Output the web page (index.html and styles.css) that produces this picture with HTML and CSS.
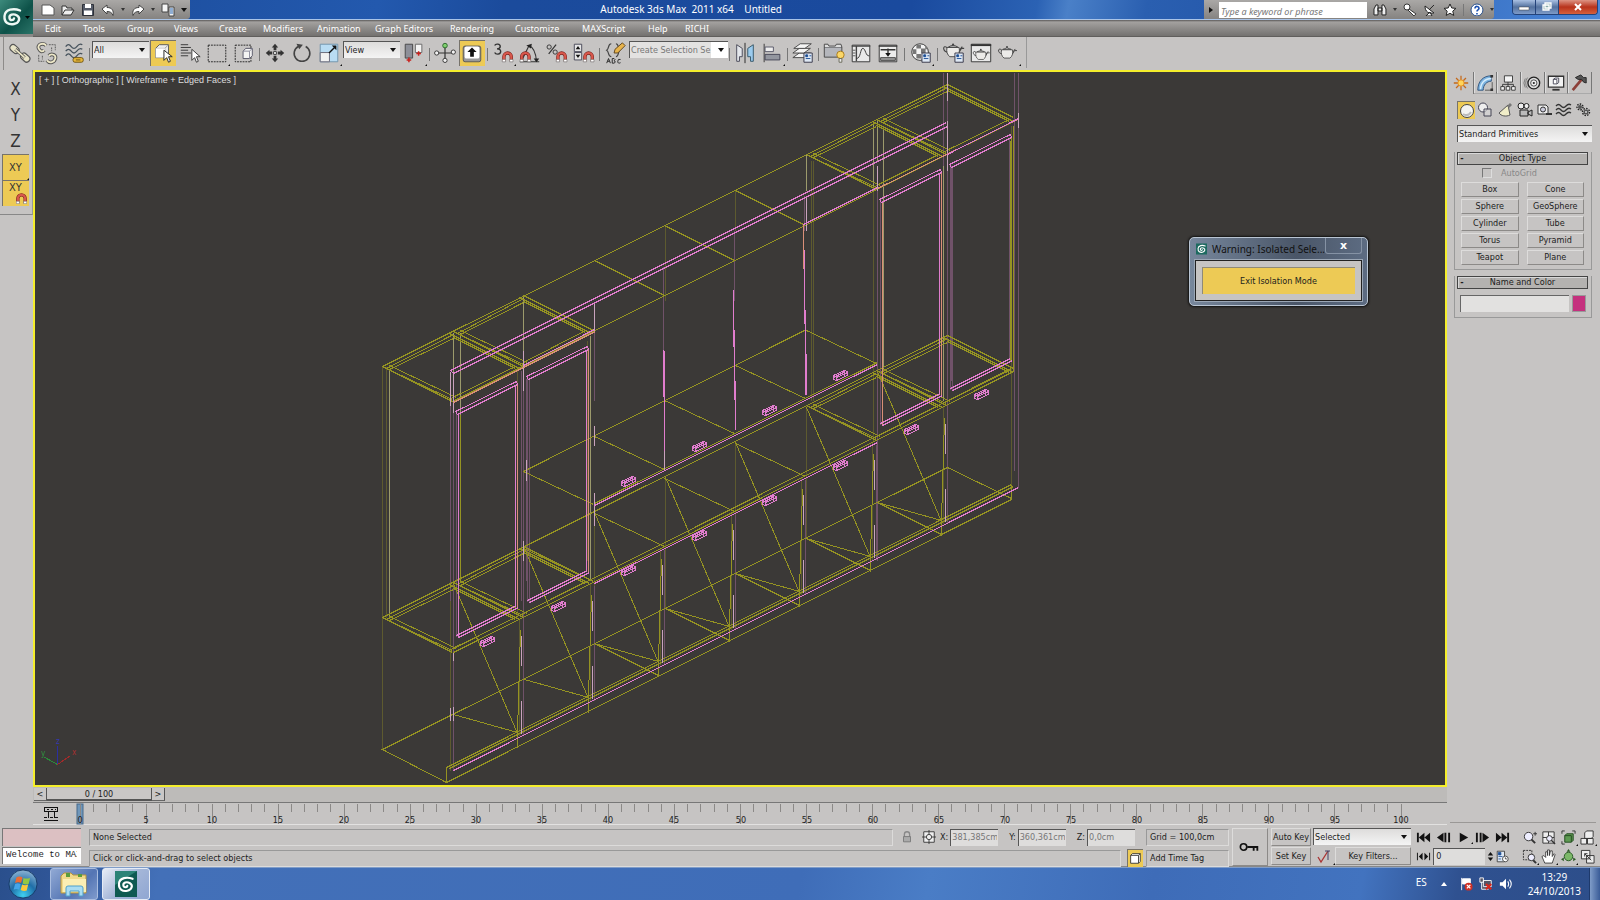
FILE: index.html
```html
<!DOCTYPE html>
<html lang="en">
<head>
<meta charset="utf-8">
<title>Autodesk 3ds Max 2011 x64 - Untitled</title>
<link rel="stylesheet" href="styles.css">
</head>
<body>
<svg class="defs" aria-hidden="true">
  <defs>
    <g id="magnet"><path d="M1 10V5a4 4 0 0 1 8 0v5" fill="none" stroke="#7a1f1a" stroke-width="3.6"/><path d="M1 9V5a4 4 0 0 1 8 0v4" fill="none" stroke="#d8584c" stroke-width="2.4"/><path d="M-.8 8h3.6v2.6H-.8zM7.200 8h3.600v2.600H7.200z" fill="#fff" stroke="#555" stroke-width=".5"/></g>
    <g id="teapot"><path d="M5 6c-2-3-5-2-4 1 .6 2 3 3 4.500 3M17 9l4-5M17 11l3-5h3" fill="none" stroke="#444" stroke-width="1.200"/><path d="M4.500 5h13c1 4 0 8-3 10h-7c-3-2-4-6-3-10z" fill="#ecebe9" stroke="#444"/><path d="M6 4.500Q11 1 16 4.500z" fill="#fff" stroke="#444"/><circle cx="11" cy="1.800" r="1.200" fill="#444"/></g>
    <g id="panelbox"><path d="M0 0h9v10H0z" fill="#dfe9f5" stroke="#334"/><path d="M2 2h2v2H2zM2 6h5M6 3h2" fill="#1c4e96" stroke="#1c4e96"/></g>
    <g id="maxlogo"><path d="M20 5.500C14 3 5 4 4.500 11S9 20 14 19s7-6 3-8.500-8-.5-7.500 2.500 4 2.500 4.500.500" fill="none" stroke="currentColor" stroke-width="2.400" stroke-linecap="round"/></g>
  </defs>
</svg>

<header class="top">
  <button class="app" aria-label="Application menu">
    <svg viewBox="0 0 33 33"><g transform="translate(0 4)" color="#eef8f4"><use href="#maxlogo"/></g><path d="M25 15h5l-2.500 3z" fill="#000"/></svg>
  </button>
  <div class="title">
    <div class="quick">
      <button aria-label="New"><svg viewBox="0 0 14 14"><path d="M1 2h8l4 3v7H1z" fill="#fff" stroke="#555"/></svg></button>
      <button aria-label="Open"><svg viewBox="0 0 14 14"><path d="M1 12V3h4l1 2h5v2M1 12l3-5h9l-3 5z" fill="#eee" stroke="#333"/></svg></button>
      <button aria-label="Save"><svg viewBox="0 0 14 14"><path d="M1.500 1.500h11v11h-11z" fill="#555b68" stroke="#2d3038"/><path d="M4 1h6v4H4zM3 7.500h8V12H3z" fill="#fff"/></svg></button>
      <button aria-label="Undo"><svg viewBox="0 0 14 14"><path d="M1 6l5-4v2.500c5 0 7 3 6 8-1-3-3-4-6-4V11z" fill="#fff" stroke="#444"/></svg></button>
      <i class="dd"></i>
      <button aria-label="Redo"><svg viewBox="0 0 14 14"><path d="M13 6L8 2v2.500c-5 0-7 3-6 8 1-3 3-4 6-4V11z" fill="#fff" stroke="#444"/></svg></button>
      <i class="dd"></i>
      <button aria-label="Project folder"><svg viewBox="0 0 14 14"><path d="M1 1h6v8H1zM8 4h5v9H8z" fill="#f4f4f4" stroke="#444"/><path d="M9 6h3M9 8h3M9 10h3" stroke="#2a66b0"/></svg></button>
      <i class="dd big"></i>
    </div>
    <h1>Autodesk 3ds Max&nbsp; 2011 x64 <span>Untitled</span></h1>
    <div class="info">
      <i class="play"></i>
      <input type="text" aria-label="Search" placeholder="Type a keyword or phrase">
      <button aria-label="Find"><svg viewBox="0 0 14 14"><path d="M1 12V6l2-4h2v10zM9 12V2h2l2 4v6zM5 5h4v3H5z" fill="#eee" stroke="#222"/></svg></button>
      <i class="dd"></i>
      <button aria-label="Subscription"><svg viewBox="0 0 14 14"><path d="M6 6l7 5-2 2-6-6" fill="#fff" stroke="#333"/><circle cx="4" cy="4" r="3" fill="#fff" stroke="#333"/></svg></button>
      <button aria-label="Communication"><svg viewBox="0 0 14 14"><path d="M2 3c0 6 4 8 9 7zM7 6l4-4M3 13h6l-2-4z" fill="#fff" stroke="#222"/></svg></button>
      <button aria-label="Favorites"><svg viewBox="0 0 14 14"><path d="M7 1l1.800 4 4.200.4-3.200 2.800 1 4.300L7 10.300 3.200 12.500l1-4.300L1 5.400 5.200 5z" fill="#fff" stroke="#222"/></svg></button>
      <i class="bar"></i>
      <button aria-label="Help"><svg viewBox="0 0 14 14"><circle cx="7" cy="7" r="6" fill="#fff" stroke="#28508c"/><path d="M5 5.500c0-3 4-2.500 4 0C9 7 7 7 7 8.500M7 10v1.500" fill="none" stroke="#1a4fb0" stroke-width="1.600"/></svg></button>
      <i class="dd"></i>
    </div>
    <div class="win">
      <button aria-label="Minimize"><svg viewBox="0 0 14 10"><path d="M2 5h10v3H2z" fill="#fff" stroke="#444" stroke-width=".5"/></svg></button>
      <button aria-label="Restore"><svg viewBox="0 0 14 10"><path d="M5 1h6v5H5zM3 3h6v5H3z" fill="#8aa" stroke="#fff" stroke-width="1.300"/></svg></button>
      <button class="close" aria-label="Close"><svg viewBox="0 0 14 10"><path d="M4 2l6 6M10 2L4 8" stroke="#fff" stroke-width="2"/></svg></button>
    </div>
  </div>
  <nav class="menu">
    <button>Edit</button><button>Tools</button><button>Group</button><button>Views</button><button>Create</button><button>Modifiers</button><button>Animation</button><button>Graph Editors</button><button>Rendering</button><button>Customize</button><button>MAXScript</button><button>Help</button><button>RICHI</button>
  </nav>
</header>

<div class="toolbar">
  <button aria-label="Link"><svg viewBox="0 0 26 26"><g fill="#e8e4c8" stroke="#555" stroke-width="1.300"><rect x="2" y="5" width="11" height="7" rx="3.500" transform="rotate(42 7 8)"/><rect x="13" y="14" width="11" height="7" rx="3.500" transform="rotate(42 18 18)"/></g><path d="M8 9l10 9" stroke="#555" stroke-width="3.500"/><path d="M8 9l10 9" stroke="#eee8c8" stroke-width="1.800"/></svg></button>
  <button aria-label="Unlink"><svg viewBox="0 0 26 26"><g fill="none"><path d="M12 5C9 1 2 4 4 8s4 4 6 2M15 16c3-3 8-1 7 3s-6 6-9 2" stroke="#555" stroke-width="4"/><path d="M12 5C9 1 2 4 4 8s4 4 6 2M15 16c3-3 8-1 7 3s-6 6-9 2" stroke="#eee8c8" stroke-width="2"/><path d="M15 4h7v6M4 15v7h6M18 7v4M8 16v4" stroke="#555" stroke-dasharray="2 1"/></g></svg></button>
  <button aria-label="Bind to space warp"><svg viewBox="0 0 26 26"><path d="M4 6q3-4 6 0t6 0 6-2M4 11q3-4 6 0t6 0 6-2M4 16q3-4 6 0t6 0 6-2" fill="none" stroke="#46525c" stroke-width="1.400"/><rect x="12" y="18" width="11" height="5" rx="2" fill="#e8b83c" stroke="#6a5010"/><path d="M15 20.500h5" stroke="#6a5010"/></svg></button>
  <i class="sep"></i>
  <span class="sel filter"><select aria-label="Selection filter"><option>All</option></select></span>
  <button class="on" aria-label="Select object"><svg viewBox="0 0 26 26"><path d="M5 8l4-4h10v10l-4 4H5z" fill="#eee" stroke="#555"/><path d="M5 8h10v10M15 8l4-4" fill="none" stroke="#999"/><path d="M5 8h10v10H5z" fill="#fff"/><path d="M14 10v11l3-3 2 5 2-1-2-5h4z" fill="#fff" stroke="#222"/></svg></button>
  <button aria-label="Select by name"><svg viewBox="0 0 26 26"><path d="M3 4h8M3 7h11M3 10h8M3 13h11M3 16h8" stroke="#333"/><path d="M15 9v12l3-3 2 5 2-1-2-5h4z" fill="#fff" stroke="#333"/></svg></button>
  <button class="fly" aria-label="Rectangular region"><svg viewBox="0 0 26 26"><path d="M3.500 4.500h19v18h-19z" fill="none" stroke="#222" stroke-dasharray="2 1"/></svg></button>
  <button aria-label="Window crossing"><svg viewBox="0 0 26 26"><path d="M3.500 4.500h17v18h-17z" fill="none" stroke="#222" stroke-dasharray="2 1"/><path d="M12 11l3-3h7v8l-3 3h-7z" fill="#f4f4f4" stroke="#556"/><path d="M12 11h7v8M19 11l3-3" fill="none" stroke="#889"/></svg></button>
  <i class="sep"></i>
  <button aria-label="Move"><svg viewBox="0 0 26 26"><path d="M13 3l3.500 4h-2v3h-3V7h-2zM13 23l3.500-4h-2v-3h-3v3h-2zM3 13l4-3.500v2h3v3H7v2zM23 13l-4-3.500v2h-3v3h3v2z" fill="#333"/><path d="M11.500 11.500h3v3h-3z" fill="#fff" stroke="#333"/></svg></button>
  <button aria-label="Rotate"><svg viewBox="0 0 26 26"><path d="M9 6a8.500 8.500 0 1 0 8 0" fill="none" stroke="#444" stroke-width="1.700"/><path d="M7 3l7 1-4 5z" fill="#444"/></svg></button>
  <button class="fly" aria-label="Scale"><svg viewBox="0 0 26 26"><path d="M3.500 3.500h19v19h-19z" fill="#b9dcf3" stroke="#6f93ab"/><path d="M3.500 12.500h10v10h-10z" fill="#f2f2f2" stroke="#667"/><path d="M13 13l6-6" stroke="#111" stroke-width="1.500"/><path d="M21 5v5l-5-5z" fill="#111"/></svg></button>
  <span class="sel filter"><select aria-label="Reference coordinates"><option>View</option></select></span>
  <button class="fly" aria-label="Pivot center"><svg viewBox="0 0 26 26"><path d="M3.500 3.500h8v15h-8z" fill="#8d8f98" stroke="#444"/><path d="M14.500 3.500h7v9h-7z" fill="#f4f4f4" stroke="#666"/><path d="M7.500 18v5M5 20.500h5M18 11v5M15.500 13.500h5" stroke="#c9201c" stroke-width="1.600"/></svg></button>
  <i class="sep"></i>
  <button aria-label="Manipulate"><svg viewBox="0 0 26 26"><path d="M13 6v14M5 13h16" stroke="#333" stroke-width="1.300"/><g fill="#f2f2f2" stroke="#333"><circle cx="4" cy="13" r="2.300"/><circle cx="22" cy="12" r="2.300"/><circle cx="13" cy="21" r="2.300"/></g><circle cx="13" cy="5" r="2.500" fill="#7ed06e" stroke="#2c662c"/></svg></button>
  <button class="on" aria-label="Keyboard override"><svg viewBox="0 0 26 26"><rect x="3.500" y="5.500" width="19" height="17" rx="2" fill="#999" stroke="#555"/><rect x="5" y="6" width="16" height="13" rx="2" fill="#fff"/><path d="M13 7l5 5h-3v5h-4v-5H8z" fill="#111"/></svg></button>
  <i class="sep"></i>
  <button class="fly" aria-label="Snaps"><svg viewBox="0 0 26 26"><path d="M4 5c1-2.500 6-2 6 1 0 2-2 2.500-3.500 2.500 2 0 4 1 4 3 0 3.500-5.500 3.500-6.500 1" fill="none" stroke="#333" stroke-width="1.500"/><use href="#magnet" x="13" y="12"/></svg></button>
  <button aria-label="Angle snap"><svg viewBox="0 0 26 26"><path d="M4 21L12 5M2 22.500h21M12 5q7 3 8 17" fill="none" stroke="#333" stroke-width="1.200"/><path d="M9 5l6-2-1 5zM17 19l3 4 3-4z" fill="#222"/><use href="#magnet" x="3" y="12"/></svg></button>
  <button aria-label="Percent snap"><svg viewBox="0 0 26 26"><path d="M12 4L4 14" stroke="#333" stroke-width="1.300"/><circle cx="4.500" cy="6.500" r="2.300" fill="none" stroke="#333"/><circle cx="11" cy="12" r="2.300" fill="none" stroke="#333"/><use href="#magnet" x="13" y="12"/></svg></button>
  <button aria-label="Spinner snap"><svg viewBox="0 0 26 26"><path d="M2.500 3.500h8v8h-8zM2.500 12.500h8v8h-8z" fill="#e6e6e6" stroke="#445"/><path d="M4 9h5L6.500 5.500zM4 15h5l-2.500 3.500z" fill="#111"/><use href="#magnet" x="13" y="12"/></svg></button>
  <i class="sep"></i>
  <button aria-label="Edit selection sets"><svg viewBox="0 0 26 26"><path d="M9 3C5 3 7 8 4 10c3 2 1 7 5 7M14 3c3 0 2 4 4 7-2 3-1 7-4 7" fill="none" stroke="#444" stroke-width="1.300"/><path d="M12 13l1-4 8-7 3 3-8 8z" fill="#e8b44c" stroke="#5c421c"/><path d="M4 24l2-5 2 5M5 22h2M10 24v-5h2q2 1 0 2.500 3 1 0 2.500zM19 20q-3-1-3 2t3 1.500" fill="none" stroke="#222"/></svg></button>
  <span class="sel named"><input type="text" aria-label="Named selection sets" placeholder="Create Selection Se"></span>
  <i class="sep"></i>
  <button aria-label="Mirror"><svg viewBox="0 0 26 26"><path d="M4 4l6 4v9l-3 0v5H4z" fill="#e4e7ec" stroke="#445"/><path d="M22 4l-6 4v9h3v5h3z" fill="#9bcbee" stroke="#356"/><path d="M13 2v22" stroke="#222"/></svg></button>
  <button class="fly" aria-label="Align"><svg viewBox="0 0 26 26"><path d="M4.500 3v20" stroke="#333"/><path d="M5.500 6.500h9v5h-9z" fill="#eee" stroke="#556"/><path d="M5.500 14.500h16v6h-16z" fill="#93969f" stroke="#445"/></svg></button>
  <i class="sep"></i>
  <button aria-label="Layers"><svg viewBox="0 0 26 26"><g fill="#f5f5f5" stroke="#444"><path d="M2 18l7-5h12l-7 5z"/><path d="M2 13l7-5h12l-7 5z"/><path d="M3 8l7-5h12l-7 5z"/></g><use href="#panelbox" x="14" y="13"/></svg></button>
  <i class="sep"></i>
  <button aria-label="Containers"><svg viewBox="0 0 26 26"><path d="M2.500 6.500h19v11h-19z" fill="#b4b6bc" stroke="#444"/><path d="M2.500 6.500v-3h4l1 2h7l1-2h5l1 3" fill="#ddd" stroke="#444"/><circle cx="20" cy="15" r="4" fill="#fbd768" stroke="#a6791b"/><path d="M18.500 19h3v4h-3z" fill="#eee" stroke="#665"/></svg></button>
  <button aria-label="Curve editor"><svg viewBox="0 0 26 26"><path d="M3.500 4.500h19v18h-19z" fill="#e9e9e9" stroke="#333"/><path d="M3 5.500h20M8 5v17" stroke="#444" stroke-width="1.500"/><path d="M8 19c5 0 4-11 7-11s3 9 7 8" fill="none" stroke="#333"/><path d="M4 10h3M4 13h3M4 16h3" stroke="#555"/></svg></button>
  <button aria-label="Schematic view"><svg viewBox="0 0 26 26"><path d="M3.500 4.500h19v18h-19z" fill="#ececec" stroke="#333"/><path d="M3 5.500h20M5 9.500h16M13 8v7" stroke="#333" stroke-width="1.500"/><path d="M10 13h6l-3 4z" fill="#111"/><path d="M5 18h16v3H5z" fill="#999" stroke="#444"/></svg></button>
  <i class="sep wide"></i>
  <button class="fly" aria-label="Material editor"><svg viewBox="0 0 26 26"><circle cx="12" cy="12" r="9" fill="#f4f4f4" stroke="#333"/><path d="M8 4h5v4H8zM4 9h4v5H4zM13 8h5v5h-5zM8 14h5v5H8zM17 5l4 4h-3z" fill="#777"/><use href="#panelbox" x="14" y="13"/></svg></button>
  <i class="sep wide"></i>
  <button aria-label="Render setup"><svg viewBox="0 0 26 26"><use href="#teapot" x="1" y="2"/><use href="#panelbox" x="14" y="13"/></svg></button>
  <button aria-label="Rendered frame"><svg viewBox="0 0 26 26"><path d="M2.500 3.500h21v19h-21z" fill="#e9e9e9" stroke="#333"/><path d="M2 4.500h22" stroke="#333" stroke-width="2"/><g transform="translate(4 8) scale(.8)"><use href="#teapot"/></g></svg></button>
  <button class="fly" aria-label="Render"><svg viewBox="0 0 26 26"><g transform="translate(2 5) scale(.9)"><use href="#teapot"/></g></svg></button>
  <i class="edge"></i>
</div>

<main>
  <aside class="axes">
    <button>X</button><button>Y</button><button>Z</button>
    <button class="on small fly">XY</button>
    <button class="on small snap">XY<svg viewBox="0 0 12 12"><use href="#magnet" x="1" y="1"/></svg></button>
  </aside>

  <section class="center">
    <div class="viewport">
      <p>[ + ] [ Orthographic ] [ Wireframe + Edged Faces ]</p>
      <svg id="scene" viewBox="35 72 1410 713" role="img" aria-label="Cabinet wireframe"></svg>
      <div class="dialog" role="dialog" aria-label="Isolation">
        <header><svg viewBox="0 0 24 24"><rect width="24" height="24" fill="#1d6a60"/><g color="#fff"><use href="#maxlogo"/></g></svg><span>Warning: Isolated Sele...</span><button aria-label="Close">x</button></header>
        <div class="inner"><button>Exit Isolation Mode</button></div>
      </div>
    </div>
    <div class="slider"><button>&lt;</button><button class="thumb">0 / 100</button><button>&gt;</button></div>
    <div class="track"><svg id="ruler" viewBox="33 803 1414 22" role="img" aria-label="Track bar"></svg></div>
  </section>

  <aside class="panel">
    <div class="tabs">
      <button class="cur" aria-label="Create"><svg viewBox="0 0 20 20"><path d="M10 2v16M2 10h16M4.500 4.500l11 11M15.500 4.500l-11 11" stroke="#c46a1c" stroke-width="1.400"/><circle cx="10" cy="10" r="3.500" fill="#ffd45a" stroke="#e18a22"/></svg></button>
      <button aria-label="Modify"><svg viewBox="0 0 20 20"><path d="M2 18C2 8 8 2 17 2v6c-5 0-9 4-9 10z" fill="#7db4e0" stroke="#2c4f78"/><path d="M5 17C5 10 10 5 17 5" fill="none" stroke="#d5ecfb" stroke-width="1.500"/><path d="M10 18h8V9" fill="none" stroke="#555"/><path d="M16 16h3v3h-3zM16 1h3v3h-3z" fill="#333"/></svg></button>
      <button aria-label="Hierarchy"><svg viewBox="0 0 20 20"><path d="M6 2h9v7H6zM2 14h4v4H2zM8 14h4v4H8zM14 14h4v4h-4z" fill="#f4f4f4" stroke="#333"/><path d="M10 9v5M4 14v-2.500h12V14" fill="none" stroke="#333"/></svg></button>
      <button aria-label="Motion"><svg viewBox="0 0 20 20"><path d="M5 4q-4 6 0 12M2.500 5q-3 5 0 10" fill="none" stroke="#777"/><circle cx="12" cy="10" r="6.500" fill="#ddd" stroke="#222" stroke-width="1.500"/><circle cx="12" cy="10" r="3.500" fill="#eee" stroke="#444"/><circle cx="12" cy="10" r="1.200" fill="#222"/></svg></button>
      <button aria-label="Display"><svg viewBox="0 0 20 20"><path d="M1.500 2.500h17v12h-17z" fill="#f2f2f2" stroke="#333" stroke-width="1.400"/><path d="M7 6l2-1.500h4v5L11 11H7zM7 6h4v5" fill="#fff" stroke="#445"/><path d="M6 17.500h8" stroke="#333" stroke-width="2"/></svg></button>
      <button aria-label="Utilities"><svg viewBox="0 0 20 20"><path d="M13 6L3 18" stroke="#8c3f38" stroke-width="3"/><path d="M6 4l6-3 3 3h3v6l-3-1-2-3H9z" fill="#555" stroke="#222"/></svg></button>
    </div>
    <div class="cats">
      <button class="on" aria-label="Geometry"><svg viewBox="0 0 18 18"><circle cx="10" cy="10" r="6.500" fill="#f4f4f2" stroke="#444"/><path d="M6 13q5 3 8-2" stroke="#bbb" stroke-width="2" fill="none"/></svg></button>
      <button aria-label="Shapes"><svg viewBox="0 0 18 18"><circle cx="7" cy="6.500" r="4.500" fill="#eee" stroke="#445"/><path d="M8 8h7v7H8z" fill="#ddd8" stroke="#445"/></svg></button>
      <button aria-label="Lights"><svg viewBox="0 0 18 18"><path d="M3 12L12 4l2 10c-4 2-9 1-11-2z" fill="#f0edc8" stroke="#555"/><path d="M11 5l3-3 2 2-3 3z" fill="#777"/></svg></button>
      <button aria-label="Cameras"><svg viewBox="0 0 18 18"><circle cx="6" cy="5" r="3" fill="#eee" stroke="#222"/><circle cx="11.500" cy="5" r="2.500" fill="#eee" stroke="#222"/><path d="M5 9h8v6H5zM13 11l4-2v6l-4-2z" fill="#bbb" stroke="#222"/></svg></button>
      <button aria-label="Helpers"><svg viewBox="0 0 18 18"><path d="M3 4h8l2 2v7H3z" fill="#eee" stroke="#333"/><circle cx="8" cy="8.500" r="2.500" fill="#ccd" stroke="#333"/><path d="M11 13h6" stroke="#333" stroke-width="2"/></svg></button>
      <button aria-label="Space warps"><svg viewBox="0 0 18 18"><path d="M2 5q2.500-3 5 0t5 0 5-1M2 9q2.500-3 5 0t5 0 5-1M2 13q2.500-3 5 0t5 0 5-1" fill="none" stroke="#333" stroke-width="1.300"/></svg></button>
      <button aria-label="Systems"><svg viewBox="0 0 18 18"><g stroke="#222" stroke-width="1.400" stroke-dasharray="1.500 1.200" fill="none"><circle cx="6" cy="6" r="3"/><circle cx="12" cy="11" r="3.500"/></g><circle cx="6" cy="6" r="2" fill="#555"/><circle cx="12" cy="11" r="2.500" fill="#555"/><circle cx="12" cy="11" r="1" fill="#ddd"/></svg></button>
    </div>
    <span class="sel"><select aria-label="Category"><option>Standard Primitives</option></select></span>
    <section class="rollout">
      <h2><b>-</b>Object Type</h2>
      <label class="auto"><input type="checkbox" disabled>AutoGrid</label>
      <div class="prims">
        <button>Box</button><button>Cone</button><button>Sphere</button><button>GeoSphere</button><button>Cylinder</button><button>Tube</button><button>Torus</button><button>Pyramid</button><button>Teapot</button><button>Plane</button>
      </div>
    </section>
    <section class="rollout">
      <h2><b>-</b>Name and Color</h2>
      <div class="name"><input type="text" aria-label="Object name"><button aria-label="Object color"></button></div>
    </section>
  </aside>
</main>

<section class="status">
  <div class="listener"><input type="text" class="pink" aria-label="Macro recorder"><input type="text" aria-label="Listener" value="Welcome to MAXScript"></div>
  <div class="lines">
    <div class="line">
      <span class="box grow">None Selected</span>
      <button class="ico" aria-label="Lock"><svg viewBox="0 0 16 16"><path d="M5 8V5a3 3 0 0 1 6 0v3" fill="none" stroke="#888" stroke-width="1.500"/><path d="M4 7.500h8v6H4z" fill="#aaa" stroke="#777"/></svg></button>
      <button class="ico" aria-label="Absolute mode"><svg viewBox="0 0 16 16"><path d="M2 2h12v12H2z" fill="#eee" stroke="#333"/><circle cx="8" cy="8" r="3" fill="none" stroke="#333"/><path d="M8 0v5M8 11v5M0 8h5M11 8h5" stroke="#333"/></svg></button>
      <label>X:<input type="text" value="381,385cm"></label>
      <label>Y:<input type="text" value="360,361cm"></label>
      <label>Z:<input type="text" value="0,0cm"></label>
      <span class="box grid">Grid = 100,0cm</span>
    </div>
    <div class="line">
      <span class="box grow">Click or click-and-drag to select objects</span>
      <button class="ico on" aria-label="Adaptive degradation"><svg viewBox="0 0 16 16"><path d="M3 5l2-2h9v9l-2 2H3z" fill="#fff" stroke="#333"/><path d="M3 5h9v9M12 5l2-2" fill="none" stroke="#333"/></svg></button>
      <span class="box grid">Add Time Tag</span>
    </div>
  </div>
  <button class="key" aria-label="Set keys"><svg viewBox="0 0 24 14"><circle cx="5" cy="7" r="3.500" fill="none" stroke="#111" stroke-width="1.800"/><path d="M9 7h12M16 7v4M20 7v4" stroke="#111" stroke-width="2"/></svg></button>
  <div class="keys">
    <button>Auto Key</button><span class="sel"><select aria-label="Key selection"><option>Selected</option></select></span>
    <button>Set Key</button><div class="kf"><button class="flat fly" aria-label="Tangents"><svg viewBox="0 0 16 16"><path d="M2 9l3 5L12 3" fill="none" stroke="#a33" stroke-width="1.300"/><path d="M12 3v9M9 3h5" stroke="#446"/></svg></button><button>Key Filters...</button></div>
  </div>
  <div class="playback">
    <div>
      <button aria-label="Start"><svg viewBox="0 0 16 12"><path d="M1 1h2v10H1zM9 1v10L3 6zM15 1v10L9 6z"/></svg></button>
      <button aria-label="Previous"><svg viewBox="0 0 16 12"><path d="M8 1v10L1 6zM9 1h2v10H9zM13 1h2v10h-2z"/></svg></button>
      <button class="fly" aria-label="Play"><svg viewBox="0 0 16 12"><path d="M4 1v10l9-5z"/></svg></button>
      <button aria-label="Next"><svg viewBox="0 0 16 12"><path d="M8 1v10l7-5zM5 1h2v10H5zM1 1h2v10H1z"/></svg></button>
      <button aria-label="End"><svg viewBox="0 0 16 12"><path d="M13 1h2v10h-2zM7 1v10l6-5zM1 1v10l6-5z"/></svg></button>
    </div>
    <div>
      <button aria-label="Key mode"><svg viewBox="0 0 16 12"><path d="M1 2h1v8H1zM7 2v8L3 6zM14 2h1v8h-1zM9 2v8l4-4z"/></svg></button>
      <input type="text" aria-label="Frame" value="0">
      <button class="spin" aria-label="Frame spinner"><svg viewBox="0 0 10 12"><path d="M2 5h6L5 1zM2 7h6l-3 4z"/></svg></button>
      <button aria-label="Time configuration"><svg viewBox="0 0 16 16"><path d="M1.500 1.500h9v13h-9z" fill="#dfe9f5" stroke="#333"/><path d="M3 3h3v3H3zM3 8h5M3 11h3" fill="#1c4e96" stroke="#1c4e96"/><circle cx="11.500" cy="11" r="3.500" fill="#fff" stroke="#333"/><path d="M11.500 9v2h2" fill="none" stroke="#333"/></svg></button>
    </div>
  </div>
  <div class="nav">
    <button aria-label="Zoom"><svg viewBox="0 0 16 16"><circle cx="7" cy="7" r="4.500" fill="#eef" stroke="#333"/><path d="M10 10l4 4" stroke="#333" stroke-width="2"/><path d="M12 4h4M14 2v4" stroke="#333"/></svg></button>
    <button aria-label="Zoom all"><svg viewBox="0 0 16 16"><path d="M2 2h12v12H2zM8 2v12M2 8h12" fill="#eee" stroke="#333"/><circle cx="9" cy="9" r="3" fill="#eef" stroke="#333"/><path d="M11 11l4 4" stroke="#333" stroke-width="1.500"/></svg></button>
    <button class="fly" aria-label="Zoom extents"><svg viewBox="0 0 16 16"><path d="M1 4V1h3M12 1h3v3M1 12v3h3" fill="none" stroke="#333"/><path d="M4 6l2-2h7v7l-2 2H4z" fill="#5d9a52" stroke="#234b20"/><path d="M4 6h7v7" fill="none" stroke="#234b20"/></svg></button>
    <button class="fly" aria-label="Zoom extents all"><svg viewBox="0 0 16 16"><path d="M5 3l2-2h7v6l-2 2H5zM1 9h6v6H1zM8 9h6v6H8z" fill="#eee" stroke="#333"/></svg></button>
    <button class="fly" aria-label="Region zoom"><svg viewBox="0 0 16 16"><path d="M1.500 1.500h9v10h-9z" fill="none" stroke="#333" stroke-dasharray="2 1"/><circle cx="10" cy="9" r="3.500" fill="#eef" stroke="#333"/><path d="M12 12l3 3" stroke="#333" stroke-width="2"/></svg></button>
    <button class="fly" aria-label="Pan"><svg viewBox="0 0 16 16"><path d="M4 15L1 8l2-1 2 2V3h2v4-6h2v6l1-5h2v6l2-3 1 1-3 9z" fill="#fff" stroke="#333" stroke-width=".9"/></svg></button>
    <button class="fly" aria-label="Orbit"><svg viewBox="0 0 16 16"><circle cx="8" cy="8" r="4.500" fill="#7bb868" stroke="#2b5a25"/><path d="M8 0l2 3H6zM0 11l3-2v4zM16 11l-3-2v4z" fill="#2b5a25"/></svg></button>
    <button aria-label="Maximize viewport"><svg viewBox="0 0 16 16"><path d="M1.500 1.500h9v9h-9zM7 7h8v8H7z" fill="#eee" stroke="#333"/><path d="M5 5l7 7M5 8V5h3" fill="none" stroke="#333"/></svg></button>
  </div>
</section>

<footer class="taskbar">
  <button class="start" aria-label="Start"><svg viewBox="0 0 32 32"><defs><radialGradient id="orb" cx=".5" cy=".9" r=".9"><stop offset="0" stop-color="#3fd0f0"/><stop offset=".5" stop-color="#1f6ea8"/><stop offset="1" stop-color="#8fb4d4"/></radialGradient></defs><circle cx="16" cy="16" r="15" fill="url(#orb)" stroke="#163a66"/><path d="M9 9q3-2 6.500 0L14 15q-3-1.500-6.500 0z" fill="#ee6b32"/><path d="M16.500 9.500q3 1.500 7 0L22 16q-3 1-6.500-.5z" fill="#93c842"/><path d="M7.500 16q3-1.500 6 0L12 22q-3-1.500-6 0z" fill="#45a5e8"/><path d="M15 16.500q3 1.500 6.500 0L20 23q-3 1-6.500-.5z" fill="#fbc83a"/></svg></button>
  <button class="task" aria-label="Explorer"><svg viewBox="0 0 28 26"><path d="M1 5l3-3h7l2 2h13v18H1z" fill="#f0d98a" stroke="#b6943c"/><path d="M6 2h4v4H6zM18 3h4v3h-4z" fill="#5a9c3c"/><path d="M3 8h23v13H3z" fill="#fbeeb4"/><path d="M6 25v-8q0-2 2-2h13q2 0 2 2v8h-4v-5H10v5z" fill="#a9dcf2" stroke="#4ea0cc"/></svg></button>
  <button class="task active" aria-label="3ds Max"><svg viewBox="0 0 22 26"><path d="M0 0h22v26H0z" fill="#0f5a52"/><path d="M0 0h22L0 14z" fill="#2b8377"/><g transform="translate(0 3) scale(.88)" color="#fff"><use href="#maxlogo"/></g></svg></button>
  <div class="tray">
    <span>ES</span><i class="up"></i>
    <svg viewBox="0 0 16 16"><path d="M3 1v14M4 2h9v6H4z" fill="#fff" stroke="#fff"/><circle cx="11" cy="11" r="4.500" fill="#cf2f25"/><path d="M9 9l4 4M13 9l-4 4" stroke="#fff" stroke-width="1.500"/></svg>
    <svg viewBox="0 0 16 16"><path d="M5 4h9v7H5zM1 1h4v5H1zM3 6v8h8" fill="#556" stroke="#fff"/><path d="M8 8l6 6M14 8l-6 6" stroke="#d8281e" stroke-width="2.400"/></svg>
    <svg viewBox="0 0 16 16"><path d="M1 6h3l4-4v12l-4-4H1z" fill="#fff"/><path d="M10 5q2 3 0 6M12 3q4 5 0 10" fill="none" stroke="#fff" stroke-width="1.200"/></svg>
    <time>13:29<br>24/10/2013</time>
  </div>
  <button class="peek" aria-label="Show desktop"></button>
</footer>
<script src="scene.js"></script>
</body>
</html>
```

FILE: styles.css
```css
* { box-sizing: border-box; }
:root { --face: #c6c4c3; --gold: #edca55; }
body {
  margin: 0; height: 100vh; display: flex; flex-direction: column; overflow: hidden;
  background: var(--face); color: #1c1c1c;
  font: 9px/12px "DejaVu Sans Condensed", "Liberation Sans", sans-serif;
}
button, input, select { font: inherit; color: inherit; border: 0; border-radius: 0; padding: 0; margin: 0; background: none; min-width: 0; outline: 0; }
button svg { display: block; }
.defs { position: absolute; width: 0; height: 0; }
i { flex: none; }

/* title and menu */
.top { display: grid; grid-template: 20px 17px / 33px 1fr; }
.app { grid-row: 1 / 3; background: linear-gradient(135deg, #3c8a7c, #0d5148 55%, #2b7468); border-bottom: 3px solid #8a8886; }
.app svg { width: 33px; height: 33px; }
.title { display: flex; align-items: stretch; border-bottom: 1px solid #a9c4e8; background: linear-gradient(100deg, #1b4b99 0, #2359ae 22%, #1b4b9c 30%, #1a4a9e 56%, #2b62b4 64%, #4a80c8 66%, #2a5fb0 71%, #2558ab 78%, #4a86d8 100%); }
.quick, .info { display: flex; align-items: center; background: linear-gradient(#aaa8a6, #858381); border-radius: 0 0 3px 0; }
.quick { width: 157px; padding-left: 8px; gap: 6px; }
.quick button, .info button { width: 14px; }
.dd { border: 2px solid transparent; border-top: 3px solid #333; border-bottom: 0; }
.dd.big { border-width: 4px 3px 0; border-top-color: #111; }
.title h1 { flex: 1; margin: 0; text-align: right; color: #fff; font: 10px/19px "Noto Sans", sans-serif; white-space: pre; padding-right: 422px; }
.title h1 span { padding-left: 8px; }
.info { width: 290px; gap: 6px; padding-left: 5px; }
.info input { width: 149px; height: 16px; background: #fff; padding: 3px 2px 0; font: italic 9px/13px "Noto Sans", sans-serif; }
.info input::placeholder { color: #777; opacity: 1; }
.play { border: 3px solid transparent; border-left: 4px solid #111; border-right: 0; }
.bar { width: 1px; height: 12px; background: #777; }
.win { display: flex; margin: 0 2px 0 18px; height: 15px; border: 1px solid #24437a; border-top: 0; border-radius: 0 0 4px 4px; overflow: hidden; }
.win button { width: 23px; display: grid; place-items: center; background: linear-gradient(#a9c0e2, #53719e 50%, #7e9bc8); border-right: 1px solid #24437a; }
.win .close { width: 38px; background: linear-gradient(#dd9484, #b8331c 50%, #d6603c); border: 0; }
.win svg { width: 14px; height: 10px; }
.menu { display: grid; grid-template-columns: 38px 44px 47px 45px 44px 54px 58px 75px 65px 67px 66px 37px 40px; padding-left: 12px; background: linear-gradient(#5c5a59 0, #a3a19f 2px, #73716f 100%); border-bottom: 1px solid #605e5c; }
.menu button { color: #fff; text-align: left; white-space: nowrap; font: 9px/15px "Noto Sans", sans-serif; }

/* main toolbar */
.toolbar { height: 33px; display: flex; align-items: center; padding: 0 0 2px 7px; box-shadow: inset 3px 0 var(--face), inset 4px 0 #8d8b89; }
.toolbar > button { width: 26px; height: 26px; margin-right: 1px; flex: none; position: relative; }
.toolbar > button svg { width: 24px; height: 24px; margin: auto; }
.on { background: var(--gold); box-shadow: inset 1px 1px #77736a; }
.fly { position: relative; }
.fly::after { content: ""; position: absolute; right: 0; bottom: 0; border: 1px solid #111; border-left-color: transparent; border-top-color: transparent; }
.sep { width: 1px; height: 13px; margin: 4px 2px 0 1px; background: #777; }
.sep.wide { margin: 4px 3px 0 2px; }
.edge { width: 1px; align-self: stretch; background: #999; margin-left: 4px; }
.sel { position: relative; display: block; flex: none; height: 17px; }
.sel select, .sel input { appearance: none; display: block; width: 100%; height: 100%; padding: 0 2px; background: linear-gradient(#dcdbda, #f4f4f4); box-shadow: inset 1px 1px #555; }
.sel::after { content: ""; position: absolute; right: 4px; top: 7px; border: 3px solid transparent; border-top: 4px solid #111; border-bottom: 0; pointer-events: none; }
.filter { width: 57px; margin: 0 1px 6px 0; }
.named { width: 99px; margin-bottom: 6px; }
.named input { background: linear-gradient(90deg, #e3e2e1 82px, #fff 82px); }
.named input::placeholder { color: #777; opacity: 1; }

/* workspace */
main { flex: 1; min-height: 0; display: grid; grid-template-columns: 33px minmax(0, 1fr) 153px; }
.axes { display: flex; flex-direction: column; align-self: start; padding: 6px 3px 8px 2px; border-bottom: 1px solid #888; border-right: 1px solid #999; }
.axes button { height: 26px; font: 17px/26px "DejaVu Sans Condensed", sans-serif; color: #333; }
.axes .small { font-size: 11px; line-height: 25px; }
.axes .snap { position: relative; line-height: 14px; padding-bottom: 10px; }
.snap svg { position: absolute; right: 2px; bottom: 2px; width: 11px; height: 11px; }
.center { display: flex; flex-direction: column; min-width: 0; }
.viewport { flex: 1; min-height: 0; position: relative; border: 2px solid #f4ee2c; background: #3b3937; }
.viewport p { position: absolute; left: 4px; top: 2px; margin: 0; color: #ddd; font-family: "Liberation Sans", sans-serif; }
#scene { display: block; width: 100%; height: 100%; }
#scene path { fill: none; stroke-width: 1; shape-rendering: crispEdges; }
#scene .y { stroke: #959322; }
#scene .yd { stroke: #5d5a2f; }
#scene .yl { stroke: #9c9a6c; }
#scene .p { stroke: #e17dce; }
#scene .pd { stroke: #705269; }
#scene .pl { stroke: #c9a3bd; }
#scene .o { stroke: #d98f78; }
#scene text { font: 8px "DejaVu Sans Condensed", sans-serif; }

.dialog { position: absolute; top: 165px; right: 77px; width: 179px; padding: 0 5px 4px; border: 1px solid #b8c4d2; border-radius: 5px; background: linear-gradient(90deg, #77879c, #4a5668 60%, #5d6c82); box-shadow: 0 0 2px 1px #111; }
.dialog header { display: flex; align-items: center; height: 22px; font: 10px/20px "Noto Sans", sans-serif; color: #111; padding-left: 1px; }
.dialog header svg { width: 12px; height: 12px; margin-right: 5px; }
.dialog header span { flex: 1; white-space: nowrap; }
.dialog header button { width: 40px; height: 16px; align-self: flex-start; color: #fff; font: bold 11px/13px "DejaVu Sans", sans-serif; border: 1px solid #8592a4; border-top: 0; border-radius: 0 0 3px 3px; }
.dialog .inner { padding: 6px; background: var(--face); border: 1px solid #222; outline: 1px solid #9aa6b5; }
.dialog .inner button { display: block; width: 100%; height: 27px; background: var(--gold); box-shadow: inset 1px 1px #8f8a78; }

.slider { height: 16px; display: flex; background: #bdbbb9; border-bottom: 1px solid #777; padding: 1px 0 1px 1px; }
.slider button { width: 13px; background: #c9c7c6; border-right: 1px solid #555; border-bottom: 1px solid #666; }
.slider .thumb { width: 105px; border-bottom: 2px solid #555; }
.track { height: 22px; border-bottom: 1px solid #e2e1e0; }
#ruler { display: block; width: 100%; height: 22px; }
#ruler path { stroke: #8b8987; shape-rendering: crispEdges; }
#ruler text { font-size: 9px; fill: #222; text-anchor: middle; }

/* command panel */
.panel { display: flex; flex-direction: column; margin: 0 4px 2px 3px; padding: 2px 4px 0 7px; border-bottom: 1px solid #9a9896; }
.tabs { display: flex; height: 22px; margin-left: -7px; }
.tabs button { width: 24px; padding: 1px 2px; border-right: 1px solid #777; border-bottom: 1px solid #aaa; }
.tabs .cur { border-bottom: 0; }
.tabs .cur ~ button { box-shadow: inset 1px 0 #ddd; }
.tabs svg { width: 18px; height: 18px; }
.cats { display: flex; gap: 1px; padding: 7px 0 6px; }
.cats button { width: 19px; height: 18px; }
.cats svg { width: 18px; height: 18px; }
.rollout { margin: 10px 0 0 -3px; padding: 0 4px 2px 3px; border: 1px solid #999; border-top: 0; }
.rollout + .rollout { margin-top: 6px; padding-bottom: 5px; }
.rollout h2 { margin: 0 -1px; height: 13px; font: inherit; text-align: center; border: 1px solid #444; background: #b4b2b0; box-shadow: inset 1px 1px #d8d8d8; line-height: 11px; }
.rollout b { float: left; width: 8px; margin-right: -8px; }
.auto { display: flex; align-items: center; gap: 9px; height: 16px; padding-left: 24px; color: #888; }
.auto input { appearance: none; width: 10px; height: 10px; border: 1px solid; border-color: #777 #ddd #ddd #777; }
.prims { display: grid; grid-template-columns: 1fr 1fr; gap: 2px 8px; padding: 1px 3px 2px; }
.prims button { height: 15px; line-height: 13px; }
.prims button, .keys button, .key { border: 1px solid; border-color: #dddcdb #8c8a88 #8c8a88 #dddcdb; }
.name { display: flex; gap: 3px; padding: 6px 1px 0 2px; }
.name input { flex: 1; height: 17px; background: #e2e1e0; box-shadow: inset 1px 1px #666; }
.name button { width: 14px; height: 17px; background: #c5307e; border: 1px solid #999; }

/* status bar */
.status { height: 42px; display: flex; padding: 3px 3px 0 0; border-bottom: 1px solid #888; }
.listener { width: 83px; padding: 0 2px 2px; display: grid; grid-template-rows: 1fr 1fr; gap: 1px; }
.listener input { background: #fff; padding: 0 4px; box-shadow: inset 1px 1px #777; font: 9px/15px "Liberation Mono", monospace; width: 100%; }
.listener .pink { background: #dcc0c2; }
.lines { flex: 1; min-width: 0; margin-left: 6px; display: grid; grid-template-rows: 1fr 1fr; gap: 3px; }
.line { display: flex; align-items: center; gap: 3px; }
.box { height: 17px; line-height: 15px; border: 1px solid; border-color: #999 #dcdbda #dcdbda #999; padding: 0 3px; white-space: nowrap; }
.grow { flex: 1; margin-right: 3px; }
.grid { width: 83px; }
.ico { width: 16px; height: 18px; }
.ico svg { width: 14px; height: 14px; margin: auto; }
.line .ico + .ico { margin-left: 3px; }
.line label { display: flex; align-items: center; gap: 2px; white-space: nowrap; margin-right: 8px; }
.line label input { width: 48px; height: 17px; background: #dedddc; color: #777; padding: 0 1px 0 2px; box-shadow: inset 1px 1px #555; }
.key { width: 36px; margin: 0 3px; display: grid; place-items: center; }
.key svg { width: 22px; height: 14px; }
.keys { width: 140px; display: grid; grid-template: 18px 18px / 40px 1fr; gap: 1px 2px; }
.keys button { white-space: nowrap; line-height: 15px; }
.kf { display: flex; }
.kf button { flex: 1; }
.kf .flat { flex: none; width: 22px; border: 0; display: grid; place-items: center; }
.kf svg { width: 16px; height: 16px; }
.playback { width: 106px; padding: 0 5px 0 5px; display: grid; grid-template-rows: 18px 18px; gap: 1px; }
.playback div { display: flex; align-items: center; justify-content: space-between; }
.playback button { width: 17px; }
.playback .spin { width: 9px; }
.playback svg { width: 15px; height: 13px; fill: #111; }
.playback .spin svg { width: 9px; }
.playback input { width: 52px; height: 17px; background: #dedddc; padding: 0 3px; box-shadow: inset 1px 1px #555; }
.nav { width: 80px; display: grid; grid-template: 18px 18px / repeat(4, 1fr); gap: 1px; padding-left: 3px; }
.nav svg { width: 15px; height: 15px; margin: auto; }

/* taskbar */
.taskbar { height: 33px; display: flex; border-top: 1px solid #7f9cc8; background: linear-gradient(100deg, #2a4f8c 0, #2f5596 3%, #4370b8 10%, #3f6db8 50%, #4a7dc6 58%, #3e6cb8 72%, #4273bf 85%, #2f5190 91%, #2d4e8a 100%); }
.start { width: 50px; padding: 1px 8px; }
.start svg { width: 30px; height: 30px; }
.task { width: 48px; margin-right: 4px; display: grid; place-items: center; border: 1px solid #a9bde0; border-radius: 3px; background: linear-gradient(135deg, #91a9d4, #5475b4 60%, #7f9bcc); }
.task.active { background: linear-gradient(135deg, #e8edf6, #a4b6d8 50%, #8fa6d2); border-color: #e4ebf6; }
.task svg { width: 28px; height: 26px; }
.tray { margin-left: auto; display: flex; align-items: center; color: #fff; }
.tray svg { width: 14px; height: 14px; margin-right: 6px; }
.tray span { margin: 0 14px 4px 0; font: 10px/12px "Noto Sans", sans-serif; }
.up { border: 3px solid transparent; border-bottom: 4px solid #fff; border-top: 0; margin-right: 12px; }
.tray time { text-align: center; font: 10px/14px "Noto Sans", sans-serif; padding: 0 8px 0 9px; }
.peek { width: 11px; background: linear-gradient(90deg, #7f9cc8, #3a5c98); border-left: 1px solid #1e3a6c; }
```

FILE: scene.js
```js
const groups = {};
function line(cls, ...pts) {
  groups[cls] = (groups[cls] || '') + 'M' + pts.map(n => Math.round(n) + 0.5)
    .reduce((s, n, i) => s + (i ? (i % 2 ? ',' : 'L') : '') + n, '');
}
const verticals = (cls, list) => list.forEach(([x, top, bottom]) => line(cls, x, top, x, bottom));

// one cabinet bay to the right is (W, R)
const W = 70.6, R = -35.3;
const bx = k => 382 + W * k, by = k => 366 + R * k;
const fx = k => 452 + W * k, fy = k => 401 + R * k;

// carcass tops and lower floors
line('y', bx(0), by(0), bx(8), by(8));
line('y', fx(0), fy(0), fx(8) - 4, fy(8) + 2);
for (const h of [0, 251]) {
  for (const k of [0, 1, 6, 7]) {
    line('y', bx(k), by(k) + h, fx(k), fy(k) + h);
    line('y', bx(k) + 7, by(k) + h - 1, fx(k) + 4, fy(k) + h - 4);
    line('y', bx(k) + 4, by(k) + h + 2, fx(k), fy(k) + h - 2);
    line('y', bx(k + 1) - 4, by(k + 1) + h + 2, fx(k + 1) - 4, fy(k + 1) + h + 2);
    line('y', bx(k + 1), by(k + 1) + h + 6, fx(k + 1) - 8, fy(k + 1) + h + 2);
    line('y', bx(k) + 4, by(k) + h + 2, bx(k + 1), by(k + 1) + h + 3);
    line('y', bx(k) + 7, by(k) + h + 3, bx(k + 1), by(k + 1) + h + 7);
    line('y', fx(k), fy(k) + h - 4, fx(k + 1) - 8, fy(k + 1) + h);
    line('y', bx(k + 1), by(k + 1) + h, fx(k + 1) - (k === 7 ? 4 : 0), fy(k + 1) + h - (k === 7 ? 2 : 0));
  }
}
for (const k of [3, 4, 5]) line('y', bx(k), by(k), fx(k), fy(k));

// counter level
line('y', 382, 617, 594, 511, 947, 335);
line('y', 453, 652, 1013, 371);
line('y', 453, 648, 1011, 368);
line('p', 594, 583, 877, 442);
for (const k of [2, 3, 4, 5]) line('y', bx(k), by(k) + 253, fx(k), fy(k) + 251);

// open shelf
line('y', 523, 471, 806, 329);
line('y', 594, 503, 877, 362);
for (let k = 2; k <= 6; k++) line('y', bx(k), 471 + R * (k - 2), fx(k), 504 + R * (k - 2));
line('p', 594, 505, 877, 364);

// base floor and plinth
line('y', 446, 782, 382, 749, 947, 467, 1011, 498);
line('y', 446, 767, 446, 782, 1011, 499, 1011, 484);
line('y', 446, 767, 1011, 484);
line('y', 449, 768, 1013, 486);
line('p', 453, 770, 1018, 487);
for (let k = 0; k < 7; k++) {
  const x = W * k, y = R * k;
  line('y', 453 + x, 583 + y, 517 + x, 733 + y);
  line('y', 453 + x, 714 + y, 517 + x, 732 + y);
  if (k > 1) line('y', 453 + x, 714 + y, 517 + x, 746 + y);
  line('y', 517 + x, 732 + y, 517 + x, 747 + y);
  line('y', 520 + x, 630 + y, 517 + x, 732 + y);
  line('yd', 519 + x, 618 + y, 519 + x, 735 + y);
  line('pd', 523 + x, 620 + y, 523 + x, 735 + y);
  line('pl', 521 + x, 635 + y, 521 + x, 665 + y);
  line('pl', 521 + x, 700 + y, 521 + x, 733 + y);
}

// verticals
verticals('yd', [[382, 366, 749], [386, 366, 617], [450, 400, 770], [587, 340, 560], [517, 370, 615], [594, 515, 644],
  [665, 477, 608], [735, 442, 573], [811, 160, 400], [665, 224, 300], [735, 189, 230], [813, 160, 400],
  [873, 190, 440], [947, 336, 500], [1011, 125, 487], [806, 406, 538]]);
verticals('yl', [[389, 368, 617], [453, 332, 402], [460, 332, 582], [523, 296, 360], [590, 335, 580], [806, 153, 190],
  [873, 120, 190], [877, 118, 160], [883, 125, 370], [943, 165, 400]]);
line('y', 1010, 140, 1010, 360);
line('y', 1013, 125, 1013, 371);
verticals('pd', [[450, 371, 600], [453, 400, 770], [521, 370, 600], [526, 378, 580], [594, 301, 400], [663, 266, 350],
  [734, 230, 300], [804, 195, 230], [877, 165, 560], [947, 72, 520], [943, 72, 400], [1014, 72, 470],
  [1018, 72, 487], [951, 165, 380], [523, 296, 620]]);
verticals('pl', [[450, 371, 405], [453, 371, 412], [594, 301, 330], [594, 425, 445], [594, 492, 525], [523, 350, 390],
  [526, 459, 480], [523, 540, 560], [806, 195, 230], [877, 165, 190], [947, 72, 100], [947, 120, 170],
  [1018, 112, 127], [664, 430, 470], [453, 652, 660], [450, 707, 720], [453, 706, 720]]);
line('p', 663, 350, 664, 440);
line('p', 664, 350, 664, 450);
line('p', 734, 330, 735, 430);
line('p', 733, 290, 734, 400);
line('p', 805, 310, 806, 395);
line('p', 804, 250, 805, 395);
line('o', 803, 224, 804, 312);

// pink rails
line('p', 450, 370, 946, 122);
line('p', 450, 370, 453, 373, 947, 126);
line('o', 453, 402, 595, 331);
line('p', 523, 365, 594, 329);
line('p', 803, 224, 877, 187);
line('o', 877, 188, 1017, 119);
line('p', 947, 154, 1018, 118);

// glazed door frames
for (const k of [0, 1, 6, 7]) {
  const x = W * k, y = R * k;
  line('p', 455 + x, 411 + y, 516 + x, 381 + y, 517 + x, 384 + y, 457 + x, 414 + y, 455 + x, 411 + y);
  line('p', 456 + x, 635 + y, 516 + x, 605 + y);
  line('p', 458 + x, 637 + y, 518 + x, 607 + y);
  line(k === 0 ? 'p' : k === 6 ? 'o' : 'pd', 458 + x, 412 + y, 458 + x, 636 + y);
  line('pd', 456 + x, 412 + y, 456 + x, 636 + y);
  line(k === 7 ? 'pd' : 'p', 515 + x, 384 + y, 515 + x, 606 + y);
  line(k === 7 ? 'y' : 'o', 517 + x, 384 + y, 517 + x, 608 + y);
}
line('y', 460, 414, 460, 580);

// handles
function handle(x, y) {
  line('p', x - 7, y, x + 4, y - 5, x + 7, y - 4, x + 7, y, x - 4, y + 5, x - 7, y + 4, x - 7, y);
  line('p', x - 4, y + 2, x + 7, y - 3);
  line('p', x - 7, y + 2, x + 5, y - 4);
  line('p', x - 4, y + 1, x - 4, y + 5);
  line('p', x + 4, y - 5, x + 4, y + 1);
}
for (let k = 0; k < 8; k++) handle(487 + W * k, 641 + R * k);
for (let k = 0; k < 4; k++) handle(628 + W * k, 481 + R * k);

const order = ['yd', 'pd', 'yl', 'y', 'pl', 'o', 'p'];
document.getElementById('scene').innerHTML = order.map(c => `<path class="${c}" d="${groups[c]}"/>`).join('') +
  '<path d="M57.500 764.500V746" stroke="#2b2fa0"/><path d="M57.500 764.500L70 756" stroke="#a02a2a"/><path d="M57.500 764.500L44 757" stroke="#2a8a3a"/>' +
  '<text x="56" y="744" fill="#3438b0">z</text><text x="72" y="755" fill="#a83030">x</text><text x="41" y="756" fill="#2e9440">y</text>';

// time ruler: 13.21 units per frame
let ticks = '', labels = '';
for (let f = 0; f <= 100; f++) {
  const x = 80 + f * 13.21, cx = Math.floor(x) + 0.5;
  ticks += `M${cx} 804v8`;
  if (f % 5 === 0) {
    ticks += `M${cx} 812v12`;
    labels += `<text x="${Math.round(x)}" y="823">${f}</text>`;
  }
}
document.getElementById('ruler').innerHTML =
  '<rect x="77" y="804" width="6" height="20" fill="#6f97bb" stroke="#47698a"/>' +
  `<path d="${ticks}"/>` + labels +
  '<path d="M44.500 807.500h13v4h-13zM47 809.500h2M51 809.500h2M55 809.500h1M44 820.500h14M44 817.500h3M50 817.500h3M55 817.500h3M48.500 812v6M54.500 812v6" fill="none" style="stroke:#111"/>';
```
